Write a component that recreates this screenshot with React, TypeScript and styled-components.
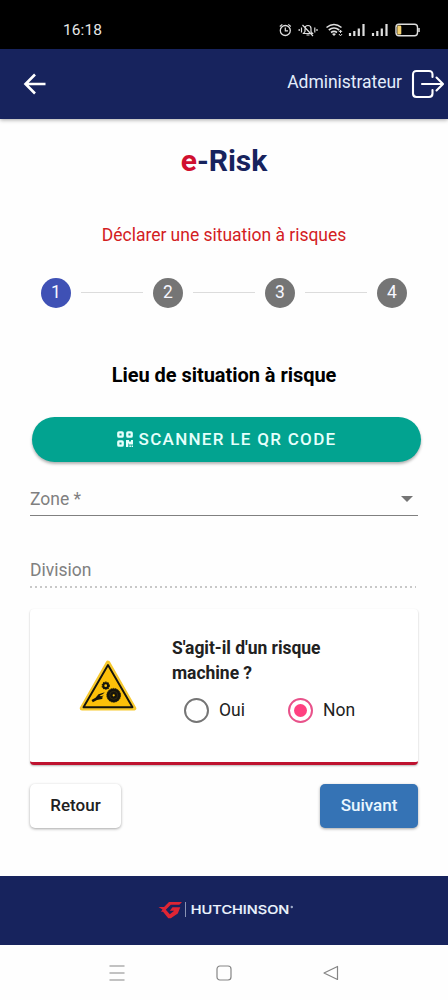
import React, { useState } from "react";
import styled, { createGlobalStyle } from "styled-components";

const GlobalStyle = createGlobalStyle`
  * { box-sizing: border-box; }
  body { margin: 0; background: #fefefe; font-family: Roboto, "Liberation Sans", sans-serif; color: #212121; }
  button { font-family: inherit; border: 0; padding: 0; }
  svg { display: block; flex: none; }
`;

const Screen = styled.div`
  width: 448px;
  height: 1000px;
  display: flex;
  flex-direction: column;
  overflow: hidden;
  background: #fefefe;
`;

const StatusBar = styled.div`
  height: 49px;
  flex: none;
  background: #000;
  display: flex;
  align-items: flex-start;
  justify-content: space-between;
  padding: 20px 27px 0 63px;
`;

const Clock = styled.span`
  font-size: 15.5px;
  line-height: 20px;
  letter-spacing: 0.1px;
  color: #e6e6e6;
`;

const TopBar = styled.header`
  height: 69.5px;
  flex: none;
  background: #17235d;
  box-shadow: 0 1px 4px rgba(0, 0, 0, 0.35);
  display: flex;
  align-items: center;
  justify-content: space-between;
  padding: 0 3px 0 23px;
`;

const Account = styled.div`
  display: flex;
  align-items: center;
  gap: 9px;
`;

const UserName = styled.span`
  font-size: 17.5px;
  line-height: 24px;
  letter-spacing: -0.03px;
  color: #e3edfc;
  margin-top: -4px;
`;

const Content = styled.main`
  flex: 1;
  display: flex;
  flex-direction: column;
  padding: 0 30px;
`;

const Title = styled.h1`
  margin: 22px 0 0;
  font-size: 30px;
  line-height: 40px;
  font-weight: 700;
  text-align: center;
  color: #17235d;
`;

const Accent = styled.span`
  color: #d0102f;
`;

const Subtitle = styled.p`
  margin: 42px 0 0;
  font-size: 17.5px;
  line-height: 24px;
  letter-spacing: -0.02px;
  text-align: center;
  color: #d3201f;
`;

const Stepper = styled.div`
  display: flex;
  align-items: center;
  gap: 10px;
  margin: 31px 11px 0;
  height: 30px;
`;

const StepDot = styled.span<{ $active?: boolean }>`
  width: 30px;
  height: 30px;
  flex: none;
  border-radius: 50%;
  display: flex;
  align-items: center;
  justify-content: center;
  padding-bottom: 1px;
  font-size: 17.5px;
  color: #f7f7ff;
  background: ${(p) => (p.$active ? "#3f51b5" : "#757575")};
`;

const StepLine = styled.span`
  flex: 1;
  height: 1px;
  background: #dcdcdc;
`;

const SectionTitle = styled.h2`
  margin: 54px 0 0;
  font-size: 20px;
  line-height: 26px;
  font-weight: 700;
  letter-spacing: -0.04px;
  text-align: center;
  color: #000;
`;

const ScanButton = styled.button`
  height: 45px;
  flex: none;
  margin: 29px -3px 0 2px;
  border-radius: 23px;
  background: #02a390;
  box-shadow: 0 2px 3px rgba(0, 0, 0, 0.3);
  display: flex;
  align-items: center;
  justify-content: center;
  gap: 5px;
  color: #e6fffb;
  font-size: 17px;
  font-weight: 500;
  letter-spacing: 1.3px;
`;

const Field = styled.div<{ $disabled?: boolean }>`
  flex: none;
  height: ${(p) => (p.$disabled ? "36px" : "31px")};
  margin-top: ${(p) => (p.$disabled ? "36px" : "23px")};
  display: flex;
  align-items: flex-start;
  justify-content: space-between;
  padding: ${(p) => (p.$disabled ? "6px 0 0" : "2px 5px 0 0")};
  font-size: 17.5px;
  line-height: 24px;
  color: #808080;
  border-bottom: ${(p) => (p.$disabled ? "0" : "1px solid #808080")};
  background: ${(p) =>
    p.$disabled
      ? "repeating-linear-gradient(90deg, #c8c8c8 0 2px, transparent 2px 5px) 0 100% / 386px 2px no-repeat"
      : "none"};
`;

const Card = styled.section`
  flex: none;
  height: 156px;
  margin-top: 21px;
  border-radius: 4px;
  border-bottom: 3px solid #bf1230;
  background: #fff;
  box-shadow: 0 1px 2px rgba(0, 0, 0, 0.28);
  display: flex;
  align-items: flex-start;
  padding: 27px 30px 0 49px;
  gap: 35px;
`;

const CardBody = styled.div`
  flex: 1;
`;

const Question = styled.p`
  margin: 0;
  width: 170px;
  font-size: 17.5px;
  line-height: 25px;
  font-weight: 700;
  letter-spacing: -0.04px;
`;

const Options = styled.div`
  display: flex;
  align-items: center;
  gap: 43px;
  margin: 11px 0 0 12px;
`;

const Option = styled.button`
  display: flex;
  align-items: center;
  gap: 10px;
  background: none;
  font-size: 17.5px;
  line-height: 26px;
  color: #212121;
`;

const Ring = styled.span<{ $on: boolean }>`
  width: 25px;
  height: 25px;
  margin-top: 1px;
  border-radius: 50%;
  border: 2.5px solid ${(p) => (p.$on ? "#e8528a" : "#757575")};
  display: flex;
  align-items: center;
  justify-content: center;

  &::after {
    content: "";
    width: 13px;
    height: 13px;
    border-radius: 50%;
    background: ${(p) => (p.$on ? "#ff4081" : "transparent")};
  }
`;

const Actions = styled.div`
  display: flex;
  justify-content: space-between;
  margin-top: 19px;
`;

const ActionButton = styled.button<{ $primary?: boolean }>`
  width: ${(p) => (p.$primary ? "98px" : "91px")};
  height: 44px;
  padding-bottom: 2px;
  border-radius: 5px;
  font-size: 17px;
  font-weight: 500;
  color: ${(p) => (p.$primary ? "#eaf7ff" : "#212121")};
  background: ${(p) => (p.$primary ? "#3573b5" : "#fff")};
  box-shadow: 0 1px 3px rgba(0, 0, 0, 0.35);
`;

const Footer = styled.footer`
  height: 69px;
  flex: none;
  background: #17235d;
  display: flex;
  align-items: center;
  justify-content: center;
  padding: 0 0 2px 4px;
`;

const SystemNav = styled.nav`
  height: 55px;
  flex: none;
  background: #fefefe;
  display: flex;
  align-items: center;
  justify-content: center;
  gap: 91px;
`;

const BackArrow = () => (
  <svg width="24" height="24" viewBox="0 0 24 24" fill="none" stroke="#fff" strokeWidth="2.6">
    <path d="M22.5 12H3M12 2.500L2.500 12L12 21.500" />
  </svg>
);

const LogoutIcon = () => (
  <svg width="34" height="30" viewBox="0 0 34 30" fill="none" stroke="#fff" strokeWidth="2.100" strokeLinecap="round" strokeLinejoin="round">
    <path d="M21.500 8V5.500Q21.500 2 18 2H5.500Q2 2 2 5.500V24.500Q2 28 5.500 28H18Q21.500 28 21.500 24.500V21" />
    <path d="M11 15H31.500M25.500 8.500L32 15L25.500 21.500" />
  </svg>
);

const StatusIcons = () => (
  <svg width="142" height="20" viewBox="279 20 142 20" fill="none" stroke="#dedede">
    <circle cx="285.300" cy="30.500" r="5" strokeWidth="1.300" />
    <path d="M285.300 27.500V30.800H288M279.800 26.500L282.300 24.400M290.800 26.500L288.300 24.400" strokeWidth="1.200" />
    <path d="M303.500 33.500H312.500L311 31.500V28.500Q311 25.500 308 25.500Q305 25.500 305 28.500V31.500ZM306.500 35H309.500M302.500 25L313 36M301.500 27.500V32.500M299.200 29V31M314.800 27.500V32.500M317 29V31" strokeWidth="1.200" />
    <path d="M326.500 27.500Q334 21.500 341.500 27.500M328.800 30Q334 26 339.200 30M331 32.500Q334 30.300 337 32.500" strokeWidth="1.600" />
    <path d="M332 34L334 36L336 34Q334 32.700 332 34Z" fill="#dedede" stroke="none" />
    <path d="M340.500 30.300V33M338.900 32L340.500 30.200L342.100 32M338.900 34L340.500 35.800L342.100 34" strokeWidth="1" />
    {[349, 372].map((x) => (
      <path key={x} d={`M${x + 1} 33V36M${x + 5.3} 31V36M${x + 9.8} 28.5V36M${x + 14.5} 24V36`} strokeWidth="2.2" />
    ))}
    <rect x="396" y="24.200" width="21.500" height="11.600" rx="3" strokeWidth="1.400" />
    <path d="M419 28V32" strokeWidth="1.500" />
    <rect x="397.300" y="25.600" width="4" height="8.800" rx="1.200" fill="#f2cf70" stroke="none" />
  </svg>
);

const QrIcon = () => (
  <svg width="17" height="16" viewBox="0 0 17 16" fill="none" stroke="#e6fffb" strokeWidth="2.300">
    <rect x="1.300" y="1.300" width="4.400" height="4.400" rx=".7" />
    <rect x="10.300" y="1.300" width="4.400" height="4.400" rx=".7" />
    <rect x="1.300" y="10.300" width="4.400" height="4.400" rx=".7" />
    <path d="M9 9H12V10.500H14V9H16V13.500H12V12.500H11.300V16H9ZM12.400 14.500H13.900V16H12.400ZM14.600 14.500H16V16H14.600Z" fill="#e6fffb" stroke="none" />
  </svg>
);

const HazardSvg = styled.svg`
  margin-top: 24px;
`;

const MachineHazard = () => (
  <HazardSvg width="58" height="52" viewBox="0 0 58 52">
    <path d="M29 3L55 48.300H3Z" fill="#f7bc12" stroke="#f7c92f" strokeWidth="4.600" strokeLinejoin="round" />
    <path d="M29 5L53.500 47.200H4.500Z" fill="#fcc009" stroke="#15140c" strokeWidth="1.900" strokeLinejoin="round" />
    <circle cx="34.700" cy="35.300" r="6.900" fill="#15140c" />
    <circle cx="34.700" cy="35.300" r="6.900" fill="none" stroke="#15140c" strokeWidth=".8" strokeDasharray="1.700 .7" />
    <circle cx="34.700" cy="35.300" r="4" fill="none" stroke="#4b3e12" strokeWidth=".5" />
    <circle cx="34.700" cy="35.300" r="1.100" fill="#fcc009" />
    <circle cx="26.700" cy="25.700" r="2.400" fill="none" stroke="#15140c" strokeWidth="2" />
    <circle cx="26.700" cy="25.700" r="3.600" fill="none" stroke="#15140c" strokeWidth="1.100" strokeDasharray="1.400 .9" />
    <path d="M12.500 40L16.500 37.800L19.500 34.300L25.800 32.300L24 34L20.500 35.700L22 36.200L24.800 35.600L22.500 37.500L24 37.600L23 39L18 40L13.800 42.300Z" fill="#15140c" />
  </HazardSvg>
);

const HutchinsonLogo = () => (
  <svg width="136" height="20" viewBox="158 900 136 20">
    <g fill="#df2534">
      <path d="M158.500 907H164L169 902H182L179.300 904.800H170.800L165.800 909.800L169.800 914.300L174.200 910.800H169.800L172.500 907.300H180.300L177.800 913.500L170.800 918.200H168.300L163 911.800H161L162.500 909.500Z" />
    </g>
    <path d="M185.500 902V917" stroke="#8993b4" strokeWidth="1" />
    <text x="190.800" y="913.500" fill="#edf5ff" stroke="#edf5ff" strokeWidth=".15" fontFamily="Inter, sans-serif" fontSize="11.500" fontWeight="500" textLength="98.500" lengthAdjust="spacingAndGlyphs">HUTCHINSON</text>
    <circle cx="291.800" cy="907" r="1.200" fill="#9fabc9" />
  </svg>
);

const steps = [1, 2, 3, 4];

export default function App() {
  const [answer, setAnswer] = useState("Non");
  return (
    <Screen>
      <GlobalStyle />
      <StatusBar>
        <Clock>16:18</Clock>
        <StatusIcons />
      </StatusBar>
      <TopBar>
        <BackArrow />
        <Account>
          <UserName>Administrateur</UserName>
          <LogoutIcon />
        </Account>
      </TopBar>
      <Content>
        <Title><Accent>e</Accent>-Risk</Title>
        <Subtitle>Déclarer une situation à risques</Subtitle>
        <Stepper>
          {steps.map((n) => (
            <React.Fragment key={n}>
              {n > 1 && <StepLine />}
              <StepDot $active={n === 1}>{n}</StepDot>
            </React.Fragment>
          ))}
        </Stepper>
        <SectionTitle>Lieu de situation à risque</SectionTitle>
        <ScanButton><QrIcon />SCANNER LE QR CODE</ScanButton>
        <Field>
          Zone *
          <svg width="12" height="16" viewBox="0 0 12 16">
            <path d="M0 9H12L6 15Z" fill="#757575" />
          </svg>
        </Field>
        <Field $disabled>Division</Field>
        <Card>
          <MachineHazard />
          <CardBody>
            <Question>S'agit-il d'un risque machine ?</Question>
            <Options>
              {["Oui", "Non"].map((label) => (
                <Option key={label} onClick={() => setAnswer(label)}>
                  <Ring $on={answer === label} />
                  {label}
                </Option>
              ))}
            </Options>
          </CardBody>
        </Card>
        <Actions>
          <ActionButton>Retour</ActionButton>
          <ActionButton $primary>Suivant</ActionButton>
        </Actions>
      </Content>
      <Footer><HutchinsonLogo /></Footer>
      <SystemNav>
        <svg width="16" height="16" viewBox="0 0 16 16" stroke="#858585" strokeWidth="1.200">
          <path d="M.5 1H15.500M.5 8H15.500M.5 15H15.500" />
        </svg>
        <svg width="16" height="16" viewBox="0 0 16 16" fill="none" stroke="#858585" strokeWidth="1.200">
          <rect x="1" y="1" width="14" height="14" rx="3" />
        </svg>
        <svg width="16" height="16" viewBox="0 0 16 16" fill="none" stroke="#858585" strokeWidth="1.200" strokeLinejoin="round">
          <path d="M14.500 1.500V14.500L1 8Z" />
        </svg>
      </SystemNav>
    </Screen>
  );
}
